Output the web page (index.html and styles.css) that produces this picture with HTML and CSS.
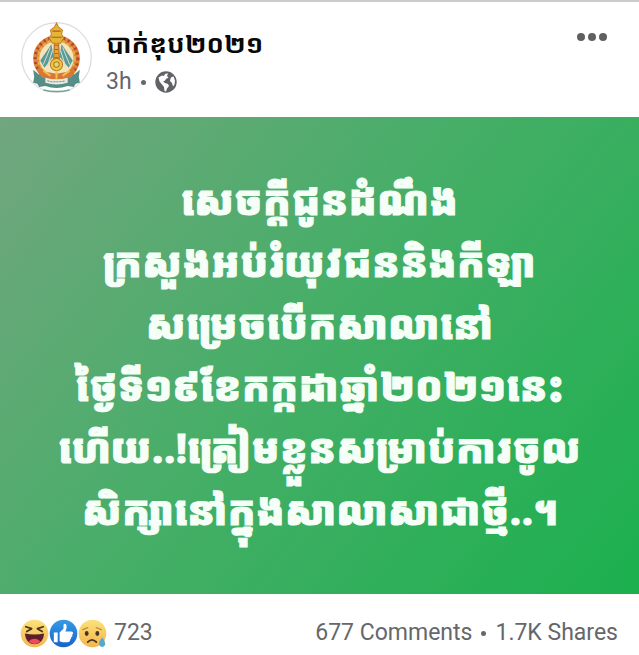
FILE: index.html
```html
<!DOCTYPE html>
<html lang="km">
<head>
<meta charset="utf-8">
<meta name="viewport" content="width=device-width, initial-scale=1">
<title>បាក់ឌុប២០២១</title>
<link rel="stylesheet" href="styles.css">
</head>
<body>
<article class="post">
  <header class="post-header">
    <a class="avatar" href="#" aria-label="បាក់ឌុប២០២១">
      <svg viewBox="0 0 70 70" aria-hidden="true">
        <circle cx="35" cy="35" r="34.3" fill="#fff" stroke="#dcdcdc" stroke-width="1.2"/>
        <circle cx="35" cy="36" r="20" fill="#f4e3bb" stroke="#d9853c" stroke-width="6"/>
        <circle cx="35" cy="36" r="21" fill="none" stroke="#b5452a" stroke-width="3" stroke-dasharray="2 3"/>
        <circle cx="35" cy="36" r="18" fill="none" stroke="#e9b145" stroke-width="2" stroke-dasharray="3 2"/>
        <path d="M30 22 19 38l4 7 9-11zM40 22l11 16-4 7-9-11z" fill="#5a9a94"/>
        <path d="m29 25-7 17M41 25l7 17M31 28l-5 16M39 28l5 16" stroke="#d5ded0" fill="none"/>
        <path d="M33 18h4l1 24h-6z" fill="#e2a637" stroke="#b7622b"/>
        <path d="M33 23h4M33 27h4M33 31h4M33 35h4" stroke="#b7622b"/>
        <path d="m35 1 2 4 4 3-1 4 2 4-3 5h-8l-3-5 2-4-1-4 4-3z" fill="#e5b535" stroke="#c4822c"/>
        <path d="M31 9h8M30 15h10" stroke="#a95e28"/>
        <circle cx="35" cy="42" r="6" fill="#f0ca35" stroke="#b9772c"/>
        <circle cx="35" cy="42" r="2.7" fill="#e8d27c" stroke="#a67c2e"/>
        <path d="m17 43 7 6 11 2 11-2 7-6-1 10-10 4H28l-10-4z" fill="#d97735"/>
        <path d="m22 48 7 5m19-5-7 5m-6-5v8" stroke="#f0c34a" stroke-width="2"/>
        <path d="m12 47 6 5 4 3q13 5 26 0l4-3 6-5-1 7 1 6-4 1-2 3-6-1q-11 4-22 0l-6 1-2-3-4-1 1-6z" fill="#548e87"/>
        <path d="M24 55q11 3 22 0v5q-11 3-22 0z" fill="#e9e9df"/>
        <path d="M26 58q9 2 18 0" stroke="#6e8d86" stroke-dasharray="2 1" fill="none"/>
        <path d="M22 67q13 3 26 0" stroke="#76a49a" stroke-width="1.6" fill="none"/>
      </svg>
    </a>
    <div class="byline">
      <h1 class="page-name">បាក់ឌុប២០២១</h1>
      <p class="meta"><span>3h</span><span class="dot"></span>
        <svg class="globe" viewBox="0 0 22 22" role="img" aria-label="Public">
          <circle cx="11" cy="11" r="10.7" fill="#606266"/>
          <path d="M3.500 6.500 7 4.500l2 .5 1-2 3-.7-1 2.700 1.500 1.500-2.500 1.500-1.500 2-1.500.5 2 1.500 3 1 1 2-2 2.500-1 3-1.500-.5-.5-4-2-2.500-2.500-3zM16.500 6l2-.5 1.500 4-.5 4-1.500 2-1-3.500-2-2 .5-2.500z" fill="#fff"/>
        </svg>
      </p>
    </div>
    <button class="more" type="button" aria-label="More"><span></span><span></span><span></span></button>
  </header>
  <p class="message">
    <span>សេចក្តីជូនដំណឹង</span>
    <span>ក្រសួងអប់រំយុវជននិងកីឡា</span>
    <span>សម្រេចបើកសាលានៅ</span>
    <span>ថ្ងៃទី១៩ខែកក្កដាឆ្នាំ២០២១នេះ</span>
    <span>ហើយ..!ត្រៀមខ្លួនសម្រាប់ការចូល</span>
    <span>សិក្សានៅក្នុងសាលាសាជាថ្មី..។</span>
  </p>
  <footer class="post-footer">
    <a class="reactions" href="#">
      <svg viewBox="0 0 30 30" aria-hidden="true">
        <defs>
          <linearGradient id="face" x2="0" y2="1"><stop stop-color="#fbe27a"/><stop offset="1" stop-color="#f2b550"/></linearGradient>
          <linearGradient id="like" x2="0" y2="1"><stop stop-color="#359bea"/><stop offset="1" stop-color="#1763c7"/></linearGradient>
        </defs>
        <circle cx="15" cy="15" r="14.3" fill="url(#face)"/>
        <path d="m6 8 6 2-5 3m17-5-6 2 5 3" fill="none" stroke="#4a351d" stroke-width="1.8" stroke-linecap="round" stroke-linejoin="round"/>
        <path d="M5 15q10 2 20 0-1 11-10 11T5 15z" fill="#5d1e2b"/>
        <path d="M9 23q6-5 12 0-3 3-6 3t-6-3z" fill="#ef4a5c"/>
      </svg>
      <svg viewBox="0 0 30 30" aria-hidden="true">
        <circle cx="15" cy="15" r="14.3" fill="url(#like)"/>
        <path d="M5 14h4v10H5zM11 14l4-4V6q1-2 3 0 1 3-1 7h6q2 0 2 2l-1 1q1 2-1 3 0 2-1 2 0 3-3 3h-5l-3-1z" fill="#fff"/>
      </svg>
      <svg viewBox="0 0 30 30" aria-hidden="true">
        <circle cx="15" cy="15" r="14.3" fill="url(#face)"/>
        <ellipse cx="9" cy="15" rx="2" ry="2.5" fill="#4a351d"/>
        <ellipse cx="20" cy="15" rx="2" ry="2.5" fill="#4a351d"/>
        <path d="m5 11 5-2m9 0 5 2" stroke="#c88b39" stroke-width="1.5" stroke-linecap="round"/>
        <path d="M10 24q4.500-5 9 0" fill="none" stroke="#4a351d" stroke-width="1.8" stroke-linecap="round"/>
        <path d="M25 19q4 5 3 8-3 4-6 0-1-3 3-8z" fill="#56a9cc"/>
      </svg>
      <span class="count">723</span>
    </a>
    <div class="stats"><a href="#">677 Comments</a><span class="dot"></span><a href="#">1.7K Shares</a></div>
  </footer>
</article>
</body>
</html>
```
FILE: styles.css
```css
* { box-sizing: border-box; }
body {
  margin: 0;
  background: #fff;
  color: #65676b;
  font-family: Roboto, "Noto Sans Khmer", "Khmer OS", sans-serif;
}
h1, p { margin: 0; }
a { color: inherit; text-decoration: none; }
svg { display: block; }
.post { border-top: 2px solid #cbcbcb; }
.post-header {
  display: flex;
  align-items: flex-start;
  padding: 20px 28px 19px 21px;
}
.avatar { width: 71px; height: 71px; }
.byline { flex: 1; padding-left: 14px; }
.page-name {
  color: #080808;
  font-size: 26px;
  line-height: 44px;
  font-weight: 700;
}
.meta {
  display: flex;
  align-items: center;
  font-size: 23px;
  line-height: 32px;
}
.dot {
  width: 5px;
  height: 5px;
  margin: 0 9px;
  border-radius: 50%;
  background: #65676b;
}
.globe { width: 22px; height: 22px; }
.more {
  display: flex;
  gap: 3px;
  padding: 11px 4px;
  border: 0;
  background: none;
}
.more span {
  width: 8px;
  height: 8px;
  border-radius: 50%;
  background: #606060;
}
.message {
  padding: 54px 16px 51px;
  background: linear-gradient(128deg, #72a67f 0%, #47ae68 45%, #1bb04e 100%);
  color: #f5fff8;
  font-size: 40px;
  font-weight: 900;
  line-height: 62px;
  text-align: center;
  -webkit-text-stroke: 1px #f5fff8;
}
.message span { display: block; white-space: nowrap; }
.post-footer {
  display: flex;
  justify-content: space-between;
  align-items: center;
  padding: 23px 21px 6px 20px;
  font-size: 23px;
  line-height: 32px;
}
.reactions, .stats { display: flex; align-items: center; }
.reactions svg { width: 29px; height: 29px; }
.count { padding-left: 7px; }
```
